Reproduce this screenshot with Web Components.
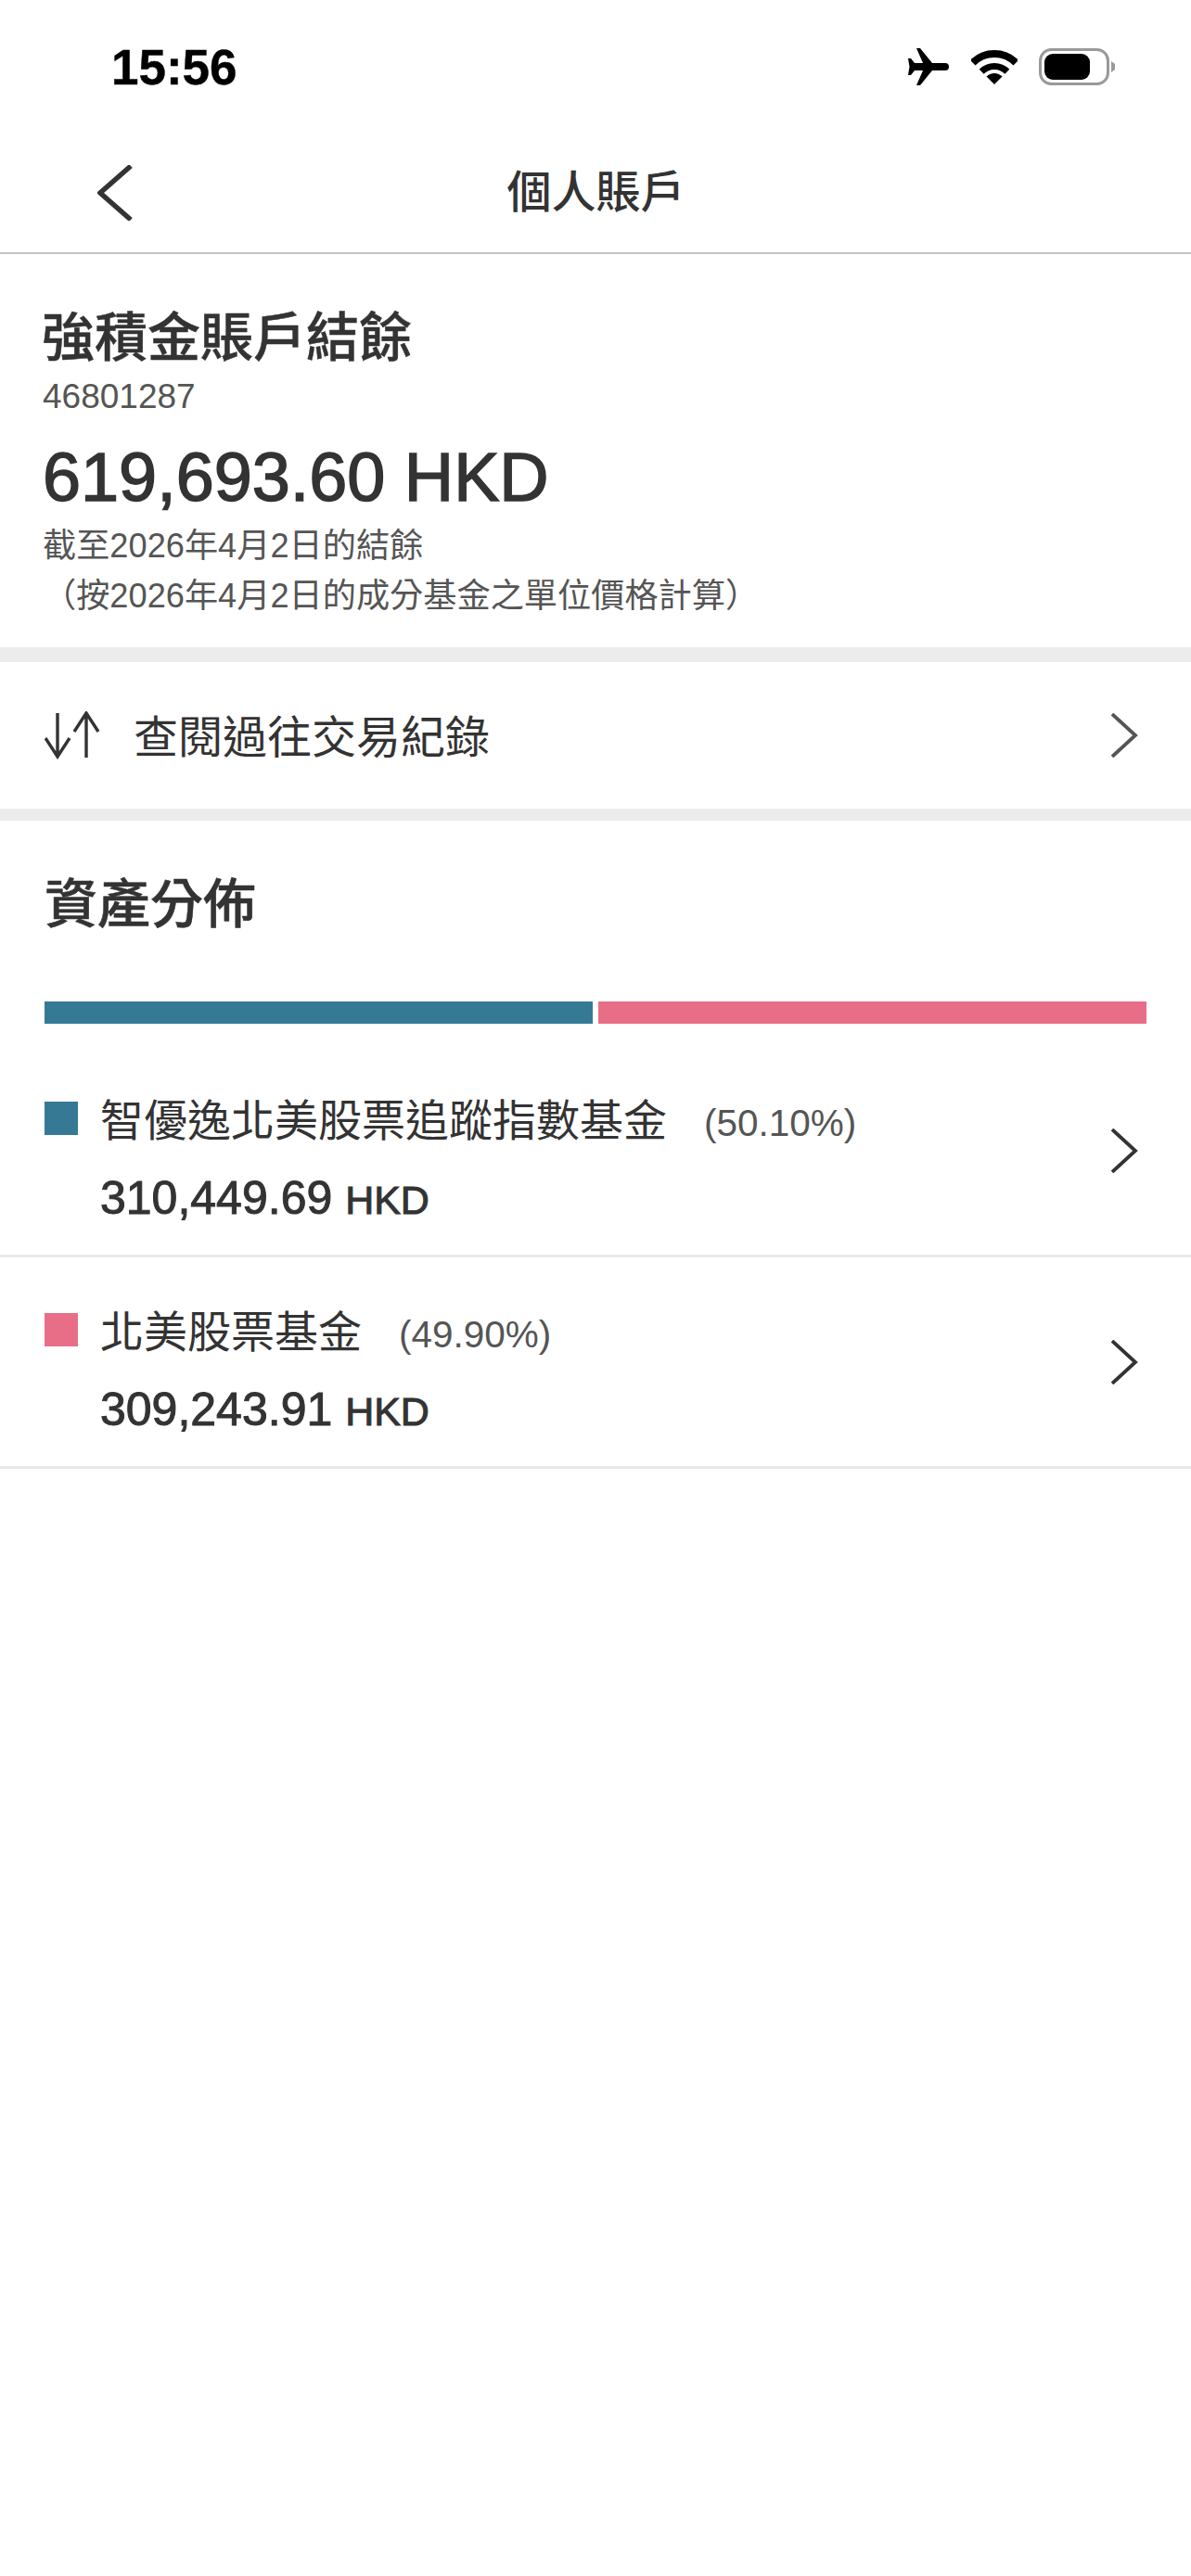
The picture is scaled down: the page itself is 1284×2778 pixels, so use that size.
<!DOCTYPE html>
<html lang="zh-Hant">
<head>
<meta charset="utf-8">
<title>個人賬戶</title>
<style>
html, body { margin: 0; background: #fff; }
body { font-family: "Liberation Sans", "Noto Sans CJK TC", sans-serif; color: #333; }
</style>
</head>
<body>
<status-bar time="15:56"></status-bar>
<nav-header>個人賬戶</nav-header>
<balance-card></balance-card>
<link-row>查閱過往交易紀錄</link-row>
<asset-section>
    <fund-row color="#367994" name="智優逸北美股票追蹤指數基金" percent="(50.10%)" amount="310,449.69"></fund-row>
    <fund-row color="#e86e88" name="北美股票基金" percent="(49.90%)" amount="309,243.91"></fund-row>
</asset-section>

<script>
const chevron = (color) => `
    <svg width="30" height="48" viewBox="0 0 30 48" fill="none">
        <path d="M2 1 L27 24 L2 47" stroke="${color}" stroke-width="3.8"/>
    </svg>`

class StatusBar extends HTMLElement{
    constructor(){
        super();
        this.attachShadow({mode:'open'});
        this.shadowRoot.innerHTML = `
        <style>
        :host { display: flex; align-items: center; height: 144px; box-sizing: border-box; padding: 0 82px 0 120px; }
        #time { font: 700 53px/1 "Liberation Sans", sans-serif; color: #000; flex: 1; -webkit-text-stroke: 0.4px #000; }
        #icons { display: flex; align-items: center; gap: 23px; }
        svg { display: block; }
        </style>
        <span id="time">${this.getAttribute('time')}</span>
        <div id="icons">
            <svg width="46" height="40" viewBox="0 0 46 40" fill="#000">
                <path d="M10 0 h4 L27 16 H41 a4 4 0 0 1 0 8 H27 L14 40 h-4 L17 24 H8 L4 29 H1 L2.5 20 L1 11 h3 L8 16 H17 Z"/>
            </svg>
            <svg width="50" height="37" viewBox="0 0 50 37" fill="none" stroke="#000">
                <path d="M1.7 13.7 A33 33 0 0 1 48.3 13.7" stroke-width="8"/>
                <path d="M11.2 23.2 A19.5 19.5 0 0 1 38.8 23.2" stroke-width="7"/>
                <path d="M25 37 L16.5 28.5 A12 12 0 0 1 33.5 28.5 Z" fill="#000" stroke="none"/>
            </svg>
            <svg width="82" height="40" viewBox="0 0 82 40" fill="none">
                <rect x="1.5" y="1.5" width="73" height="37" rx="12" stroke="#999" stroke-width="3"/>
                <rect x="6" y="6" width="49" height="28" rx="9" fill="#000"/>
                <path d="M78 14 L82 17 V23 L78 26 Z" fill="#999"/>
            </svg>
        </div>
        `
    }
}

class NavHeader extends HTMLElement{
    constructor(){
        super();
        this.attachShadow({mode:'open'});
        this.shadowRoot.innerHTML = `
        <style>
        :host { display: grid; grid-template-columns: 1fr auto 1fr; align-items: center; height: 130px; box-sizing: border-box; border-bottom: 2px solid #c4c4c4; padding: 0 0 0 105px; }
        #title { font: 500 48px/60px "Liberation Sans", "Noto Sans CJK TC", sans-serif; color: #333; transform: translateX(-52px); }
        svg { display: block; }
        </style>
        <svg width="38" height="60" viewBox="0 0 38 60" fill="none">
            <path d="M36 1 L3 30 L36 59" stroke="#333" stroke-width="5.4"/>
        </svg>
        <div id="title"><slot></slot></div>
        <span></span>
        `
    }
}

class BalanceCard extends HTMLElement{
    constructor(){
        super();
        this.attachShadow({mode:'open'});
        this.shadowRoot.innerHTML = `
        <style>
        :host { display: block; box-sizing: border-box; height: 440px; padding: 58px 44px 0 46px; border-bottom: 16px solid #ececec; font-family: "Liberation Sans", "Noto Sans CJK TC", sans-serif; color: #333; }
        h1 { margin: 0 0 0 -1px; font-size: 57px; line-height: 64px; font-weight: 500; -webkit-text-stroke: 0.5px #333; }
        #acct { font-size: 37px; line-height: 42px; color: #555; margin-top: 11px; }
        #amount { font-size: 73.8px; line-height: 84px; margin-top: 24px; -webkit-text-stroke: 1.5px #333; }
        .note { font-size: 36.2px; line-height: 54px; color: #555; }
        #notes { margin-top: 5px; }
        </style>
        <h1>強積金賬戶結餘</h1>
        <div id="acct">46801287</div>
        <div id="amount">619,693.60 HKD</div>
        <div id="notes">
            <div class="note">截至2026年4月2日的結餘</div>
            <div class="note">（按2026年4月2日的成分基金之單位價格計算）</div>
        </div>
        `
    }
}

class LinkRow extends HTMLElement{
    constructor(){
        super();
        this.attachShadow({mode:'open'});
        this.shadowRoot.innerHTML = `
        <style>
        :host { display: flex; align-items: center; box-sizing: border-box; height: 171px; padding: 0 57px 0 48px; border-bottom: 13px solid #ececec; }
        #arrows { display: block; margin-right: 36px; }
        #label { flex: 1; padding-top: 6px; font: 400 48px/60px "Liberation Sans", "Noto Sans CJK TC", sans-serif; color: #333; }
        svg { display: block; }
        </style>
        <svg id="arrows" width="60" height="52" viewBox="0 0 60 52" fill="none" stroke="#333" stroke-width="3.4">
            <path d="M14 2 V49 M1 29 L14 49 L27 29"/>
            <path d="M45 50 V3 M32 22 L45 2 L58 22"/>
        </svg>
        <div id="label"><slot></slot></div>
        ${chevron('#555')}
        `
    }
}

class AssetSection extends HTMLElement{
    constructor(){
        super();
        this.attachShadow({mode:'open'});
        this.shadowRoot.innerHTML = `
        <style>
        :host { display: block; }
        h2 { margin: 0; padding: 58px 48px 0; font: 500 57px/64px "Liberation Sans", "Noto Sans CJK TC", sans-serif; color: #333; -webkit-text-stroke: 0.5px #333; }
        #bar { display: flex; gap: 6px; height: 24px; margin: 73px 48px 24px; }
        #bar div { flex: 1; }
        </style>
        <h2>資產分佈</h2>
        <div id="bar">
            <div style="background:#367994"></div>
            <div style="background:#e86e88"></div>
        </div>
        <slot></slot>
        `
    }
}

class FundRow extends HTMLElement{
    constructor(){
        super();
        this.attachShadow({mode:'open'});
        this.shadowRoot.innerHTML = `
        <style>
        :host { display: flex; align-items: center; box-sizing: border-box; height: 228px; padding: 0 57px 0 48px; border-bottom: 3px solid #e9e9e9; font-family: "Liberation Sans", "Noto Sans CJK TC", sans-serif; color: #333; }
        #swatch { width: 36px; height: 36px; align-self: flex-start; margin-top: 60px; margin-right: 24px; background: ${this.getAttribute('color')}; }
        #body { flex: 1; align-self: flex-start; padding-top: 51px; }
        #name { display: flex; align-items: baseline; gap: 40px; font-size: 47px; line-height: 60px; }
        #pct { font-size: 40.5px; font-weight: 400; color: #555; }
        #amount { font-size: 50px; line-height: 60px; margin-top: 21px; -webkit-text-stroke: 1px #333; }
        #cur { font-size: 43px; }
        svg { display: block; }
        </style>
        <div id="swatch"></div>
        <div id="body">
            <div id="name"><span>${this.getAttribute('name')}</span><span id="pct">${this.getAttribute('percent')}</span></div>
            <div id="amount">${this.getAttribute('amount')} <span id="cur">HKD</span></div>
        </div>
        ${chevron('#333')}
        `
    }
}

customElements.define('status-bar', StatusBar);
customElements.define('nav-header', NavHeader);
customElements.define('balance-card', BalanceCard);
customElements.define('link-row', LinkRow);
customElements.define('asset-section', AssetSection);
customElements.define('fund-row', FundRow);
</script>
</body>
</html>
